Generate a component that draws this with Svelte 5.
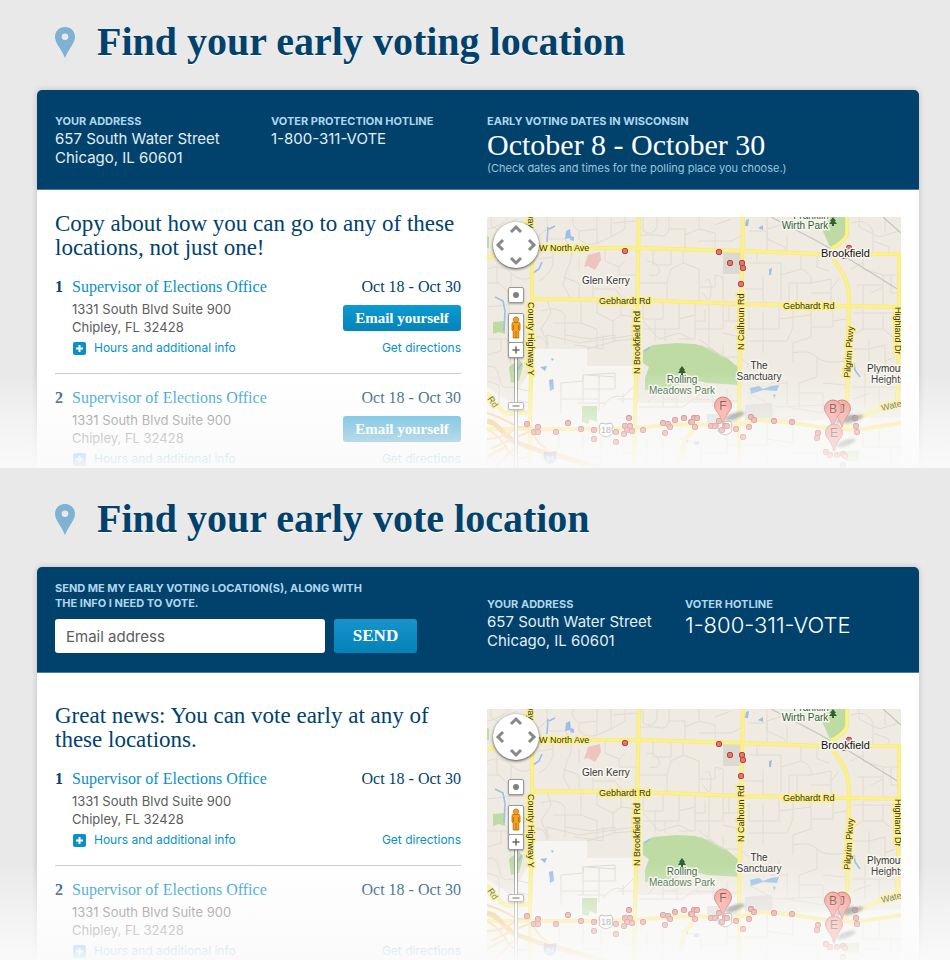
<script>
  const offices = [
    { n: 1, name: 'Supervisor of Elections Office', street: '1331 South Blvd Suite 900', city: 'Chipley, FL 32428', dates: 'Oct 18 - Oct 30' },
    { n: 2, name: 'Supervisor of Elections Office', street: '1331 South Blvd Suite 900', city: 'Chipley, FL 32428', dates: 'Oct 18 - Oct 30' }
  ];

  // Polling places plotted on the map, in map units
  const dots = [
    [40, 207], [51, 210], [47, 215], [51, 215], [69, 215], [81, 206], [94, 212], [107, 213], [107, 222],
    [129, 215], [129, 225], [142, 201], [138, 209], [143, 209], [140, 213], [145, 214], [137, 217], [156, 213],
    [176, 206], [181, 207], [183, 210], [178, 216], [188, 203], [197, 201], [204, 205], [207, 201], [210, 201],
    [205, 205], [208, 210], [224, 209], [228, 209], [232, 204], [235, 213], [238, 209], [240, 209], [249, 212],
    [256, 220], [264, 200], [267, 203], [262, 210], [287, 204], [305, 205], [331, 216], [330, 221], [368, 201],
    [369, 209], [370, 215], [339, 235], [343, 238], [350, 238], [356, 237], [358, 239], [356, 248], [138, 34],
    [232, 35], [243, 46], [255, 46], [256, 51], [254, 67], [362, 31], [357, 39]
  ];

  const pins = [
    { letter: 'F', x: 236, y: 189 },
    { letter: 'J', x: 355, y: 192 },
    { letter: 'B', x: 346, y: 192 },
    { letter: 'E', x: 347, y: 216 }
  ];

  // Residential streets
  const streets = [
    'M0 12Q14 10 22 0M4 0V8L12 14M18 8L30 2M0 52Q14 46 24 56T44 60M0 66H12L22 76V104M10 46V66M0 90L20 88M22 104L40 110M0 122H20L24 148M0 138L14 134V122M24 56V70M0 150Q10 146 12 160T24 170M0 164L12 168V186M24 170L42 174M26 182L42 186',
    'M60 0V12L48 22M86 0Q84 10 92 14V22Q100 30 110 26V0M92 14L110 12M110 26L124 20V0M124 20L138 12V0M126 6L150 4M62 22H78L84 31M66 31V48Q60 60 52 64M52 42L66 40M84 31Q86 42 80 52L76 68L84 82M76 60L92 66V82M92 40V54',
    'M106 58V82M106 72H128L136 82M118 31V44L132 50V58H150M132 50L138 44M122 60L134 72M54 94Q70 88 78 98V128M60 82L64 96L54 112L62 128M66 106H94V82M94 106L110 112V130M110 82V96L126 104L134 98V82M126 104V124L150 122M78 118L104 122L128 118M134 98L150 100M48 120Q58 118 60 130',
    'M156 0V14Q166 20 170 10V0M152 18H170Q180 22 182 12V0M182 12H198V32M198 18L212 12V0M212 12L228 16V33M212 24H244L256 18M228 8L244 2M166 32V48H184V33M160 44Q170 44 172 52T162 58M152 66H180L184 52L196 46V33M180 66V83M196 46L212 52V70H228V58M212 70V84M218 64Q224 58 224 74T216 76M228 58L236 60V84',
    'M156 84V102H176V84M168 102V124M156 112H192V84M192 102L208 98V86M208 98V122H192M208 112H236V86M222 88V128M236 104H253M236 116L253 120M242 86V104M212 122L228 134M178 112V124',
    'M262 14H280V34M280 0V22L298 30V35M280 12L300 6M300 18V35M262 46H294V84M270 34V46M294 58L314 52V37M314 52Q326 56 324 66H302V86M324 66L344 62M330 37V50L342 54M344 62V88M352 62L344 72M258 72H276V86M276 60V72M310 66V86M324 76H344',
    'M364 6Q380 0 386 14V37M372 0V10L392 20L412 14M386 24L402 30V37M376 37V52L396 58H412M396 58V88M370 68H396M376 68V88M384 76L396 70M404 58V76H412M364 52L376 46M398 0V16',
    'M262 94V112H292V90M276 94V136M262 124H300L306 110V90M292 102L324 98V90M324 98V120L306 126V146M324 110H346V92M346 104L360 102M306 136Q322 132 330 140T358 144M262 148L252 140M330 140V160L312 166V190M312 176H336V196M336 166L358 168M292 152V168M300 166H284',
    'M366 96H408M376 92V112L366 118M376 112H396V96M396 112L408 122M382 122V144M366 132H382L398 128V150M366 170H408M378 156V190M392 170V186M366 182L384 176M398 144L408 140',
    'M60 132V118L92 126L148 118M88 128L116 132V118M100 132L128 124V118M156 104L172 122L192 116L204 122M214 128L236 140H252M236 128V140M218 92V104H208',
    'M74 166V182H112V158M96 158V172H128V156M74 166L96 164V158L128 156M96 186V172M90 186H118M116 190Q124 176 136 180L146 170M130 182H146M136 176V186M100 158L128 160M74 182V196M112 182V194',
    'M152 190H196L206 182L252 184M160 222V244M176 220V251M192 222L214 226V251M214 236H240V216M240 228H252M258 228H280V206M280 222L306 226V208M306 236H330V251M280 236V251M114 220V251M96 218V240H114M72 218V232M136 222V236H146M262 192H286V202M300 190L336 196',
    'M262 176L288 190L336 188M300 164V188M376 216V230H414M392 210V230M404 230V251M376 240H394',
    'M160 186L168 178V172M176 190V174M190 190V178M210 184V172M226 190V174M240 184V172M176 182H190M210 178H226'
  ];

  const compass = [
    { dir: 'up', d: 'M2 9L7 4L12 9' },
    { dir: 'left', d: 'M9 2L4 7L9 12' },
    { dir: 'right', d: 'M5 2L10 7L5 12' },
    { dir: 'down', d: 'M2 5L7 10L12 5' }
  ];

  const mainRoads = 'M0 41L10 37M45 31L152 31L256 34L336 37H414M45 82L150 83L256 87L414 90M45 0V120L43 200V251M152 0L150 90L149 150L147 251M256 0L254 90L252 170V251M360 0V18Q356 26 345 31V38L350 48Q361 60 362 80L360 190V215M412 36V120L410 188M0 176L16 195L23 197L42 195M366 203L393 192L414 188M205 208Q206 218 198 222L193 245';
</script>

{#snippet title(text)}
  <div class="title">
    <svg class="marker" viewBox="0 0 20 31" aria-hidden="true">
      <path fill="#7fb2d2" fill-rule="evenodd" d="M10 0C15.8 0 20 4.2 20 9.8C20 14.5 16.6 18.6 14.4 22.4C12.5 25.6 11 28.6 10 31C9 28.6 7.5 25.6 5.6 22.4C3.4 18.6 0 14.5 0 9.8C0 4.2 4.2 0 10 0ZM10 6.4A3.3 3.3 0 1 0 10 13A3.3 3.3 0 1 0 10 6.4Z" />
    </svg>
    <h1>{text}</h1>
  </div>
{/snippet}

{#snippet address()}
  <div>
    <h3>Your address</h3>
    <p class="info">657 South Water Street<br />Chicago, IL 60601</p>
  </div>
{/snippet}

{#snippet locations(heading, email)}
  <div class="list">
    <h2>{heading}</h2>
    <ol>
      {#each offices as o}
        <li>
          <span class="num">{o.n}</span>
          <div class="office">
            <div class="line name"><a href="#office">{o.name}</a><span class="dates">{o.dates}</span></div>
            <div class="line">
              <address>{o.street}<br />{o.city}</address>
              {#if email}<button class="email" type="button">Email yourself</button>{/if}
            </div>
            <div class="line links">
              <a href="#hours" class="hours">
                <svg viewBox="0 0 13 13" aria-hidden="true"><rect width="13" height="13" rx="2" fill="#0990c8" /><path d="M6.5 3V10M3 6.5H10" stroke="#fff" stroke-width="2" /></svg>
                Hours and additional info
              </a>
              <a href="#directions">Get directions</a>
            </div>
          </div>
        </li>
      {/each}
    </ol>
  </div>
{/snippet}

{#snippet map(id)}
  <div class="map">
    <svg viewBox="0 0 414 251" role="img" aria-label="Map of early voting locations">
      <defs>
        <radialGradient id="{id}-pin" cx="45%" cy="30%" r="75%">
          <stop offset="0" stop-color="#ff9c90" /><stop offset="1" stop-color="#f4685f" />
        </radialGradient>
        <filter id="{id}-soft" x="-30%" y="-60%" width="160%" height="220%"><feGaussianBlur stdDeviation="1.3" /></filter>
      </defs>
      <rect width="414" height="251" fill="#efebe2" />
      <path fill="#f6f5f2" d="M45 132H100V149H150V186H252V200L300 204L414 200V251H0V170L24 186L45 150Z" />
      <g fill="#bddba3">
        <path d="M156 133L166 128L190 126L208 127L222 131L240 141L252 151V168L220 166L204 162L186 170L158 173V161L162 150L156 146Z" />
        <path d="M338 0H360V18L345 31L342 28L334 10Z" />
        <path d="M95 189H110V205L103 202L101 207L95 205Z" />
        <path d="M6 105L18 104V117L12 115L6 117ZM22 150L32 142L36 148L32 164L24 166ZM0 19L2 20V31H0ZM358 234H372V244H358Z" />
      </g>
      <path fill="#edc4c0" d="M97 50L101 38L113 35L114 43L108 53L101 49Z" />
      <path fill="#dcd9d3" d="M236 35H254V57H236ZM258 188L285 186V201L258 203ZM220 197H252V206H220Z" />
      <g fill="none" stroke="#e0dcd3" stroke-width="1">
        {#each streets as d}<path {d} />{/each}
      </g>
      <path fill="none" stroke="#c5c4c4" stroke-width="1.2" d="M284 0L330 24L362 42L412 73M396 0L414 16" />
      <g fill="none" stroke="#9dbfe6" stroke-width="1.6">
        <path d="M8 80L16 84L18 94L17 114M61 10L60 25M55 45L52 52L46 56M68 9L62 12M367 146L368 153L373 160M30 154L35 146M158 134L163 130" />
      </g>
      <g fill="#9dbfe6">
        <path d="M79 14L83 12L84 21L78 22ZM84 19L87 20V24L83 23ZM259 3L262 2L261 9H258ZM271 11L276 8V13ZM282 52L285 51L284 58H282ZM62 163L66 162L67 172L63 174ZM53 150L60 149L58 154ZM64 141L67 142L65 144ZM263 171L272 169L276 172L284 169L292 168L290 174L276 173L264 177ZM286 177L289 178L287 182ZM197 223L201 221V226ZM207 225L212 224V228H207Z" />
      </g>
      <!-- main roads -->
      <g fill="none" stroke-linejoin="round">
        <path stroke="#efe3a0" stroke-width="4" d={mainRoads} />
        <path stroke="#fdf280" stroke-width="3" d={mainRoads} />
        <path stroke="#fbe878" stroke-width="4" d="M0 212H120L148 211L170 209L205 207L248 209L270 203L300 205L340 211L370 213L414 206" />
        <path stroke="#f6bd5c" stroke-width="5" d="M0 204Q8 206 13 212T28 225L53 234L93 245L126 255" />
        <path stroke="#f8c97a" stroke-width="2" d="M0 196Q18 202 30 210H44M0 222Q16 222 28 212M4 232Q24 222 44 214L52 226L60 232M0 212Q14 220 20 232T40 240M0 240L20 229M8 251L26 232" />
      </g>
      <!-- road names -->
      <g class="road">
        <text x="52" y="34">W North Ave</text>
        <text x="112" y="87">Gebhardt Rd</text>
        <text x="296" y="92">Gebhardt Rd</text>
        <text transform="translate(41 -5) rotate(90)">way</text>
        <text transform="translate(41 85) rotate(90)">County Highway Y</text>
        <text transform="translate(153 157) rotate(-90)">N Brookfield Rd</text>
        <text transform="translate(257 133) rotate(-90)">N Calhoun Rd</text>
        <text transform="translate(363 161) rotate(-86)">Pilgrim Pkwy</text>
        <text transform="translate(408 90) rotate(90)">Highland Dr</text>
        <text transform="translate(0 182) rotate(55)">Rd</text>
        <text transform="translate(395 194) rotate(-14)">Watertown</text>
      </g>
      <!-- route shields -->
      <g fill="#fff" stroke="#777" stroke-width="1">
        <path d="M114 206L119 207L124 206L126 209Q124 212 126 216Q124 219 119 220Q114 219 112 216Q114 212 112 209Z" />
        <path d="M233 204L238 205L243 204L245 207Q243 210 245 214Q243 217 238 218Q233 217 231 214Q233 210 231 207Z" />
      </g>
      <text x="119" y="216" class="shield">18</text>
      <path fill="#5a7fc4" stroke="#fff" d="M57 234Q63 236 69 234Q73 244 63 248Q53 244 57 234Z" />
      <path fill="#d1564e" d="M57 234Q63 236 69 234L70 237H56Z" />
      <text x="63" y="244" class="shield interstate">94</text>
      <!-- polling places -->
      <g fill="#ef7267" stroke="#a84a42" stroke-width="1">
        {#each dots as [x, y]}<rect x={x - 2.500} y={y - 2.500} width="5" height="5" rx="1.500" />{/each}
      </g>
      <g class="place">
        <text x="95" y="67">Glen Kerry</text>
        <text x="334" y="40" class="city">Brookfield</text>
        <text x="272" y="152" text-anchor="middle">The</text>
        <text x="272" y="163" text-anchor="middle">Sanctuary</text>
        <text x="380" y="155">Plymouth</text>
        <text x="384" y="166">Heights</text>
      </g>
      <g class="place park">
        <text x="324" y="2" text-anchor="middle">Franklin</text>
        <text x="318" y="12" text-anchor="middle">Wirth Park</text>
        <text x="195" y="166" text-anchor="middle">Rolling</text>
        <text x="195" y="177" text-anchor="middle">Meadows Park</text>
      </g>
      <path fill="#2f6136" d="M346 0L349 4H347.500L350 7H347V9H345V7H342L344.500 4H343ZM195 149L198 153H197L199 156H196V158H194V156H191L193 153H192Z" />
      {#each pins as p}
        <ellipse cx={p.x + 12} cy={p.y + 10} rx="10" ry="3" transform="rotate(-20 {p.x + 12} {p.y + 10})" fill="#333" opacity="0.6" filter="url(#{id}-soft)" />
      {/each}
      {#each pins as p}
        <g transform="translate({p.x} {p.y})">
          <path d="M0 -9A8.500 8.500 0 0 1 8.500 0C8.500 5 2 8 0.500 18H-0.500C-2 8 -8.500 5 -8.500 0A8.500 8.500 0 0 1 0 -9Z" fill="url(#{id}-pin)" stroke="#9c4640" stroke-width="0.800" />
          <text y="4" class="letter">{p.letter}</text>
        </g>
      {/each}
    </svg>
    <div class="compass">
      {#each compass as c}
        <button type="button" class={c.dir} aria-label="Pan {c.dir}"><svg viewBox="0 0 14 14"><path d={c.d} /></svg></button>
      {/each}
    </div>
    <div class="track"></div>
    <button type="button" class="ctl reset" aria-label="Return to start"><svg viewBox="0 0 14 14"><circle cx="7" cy="7" r="3" fill="#808080" /></svg></button>
    <button type="button" class="ctl person" aria-label="Street view">
      <svg viewBox="0 0 14 28"><path fill="#f6a01c" stroke="#b8690a" stroke-width="0.800" d="M7 3A2.600 2.600 0 0 1 8.500 7.800Q11 8 11 10V16L9.800 17V24H4.200V17L3 16V10Q3 8 5.500 7.800A2.600 2.600 0 0 1 7 3Z" /><path stroke="#b8690a" stroke-width="0.800" d="M7 17V24M4.500 11V16M9.500 11V16M5 8.500H9" /></svg>
    </button>
    <button type="button" class="ctl plus" aria-label="Zoom in"><svg viewBox="0 0 14 14"><path d="M7 3.500V10.500M3.500 7H10.500" stroke="#666" stroke-width="1.500" /></svg></button>
    <button type="button" class="ctl minus" aria-label="Zoom out"><svg viewBox="0 0 14 6"><path d="M3.500 3H10.500" stroke="#666" stroke-width="1.500" /></svg></button>
  </div>
{/snippet}

<main>
  <section>
    {@render title('Find your early voting location')}
    <div class="card">
      <header class="columns">
        <div class="pair">
          {@render address()}
          <div>
            <h3>Voter protection hotline</h3>
            <p class="info">1-800-311-VOTE</p>
          </div>
        </div>
        <div>
          <h3>Early voting dates in Wisconsin</h3>
          <p class="when">October 8 - October 30</p>
          <p class="note">(Check dates and times for the polling place you choose.)</p>
        </div>
      </header>
      <div class="columns body">
        {@render locations('Copy about how you can go to any of these locations, not just one!', true)}
        {@render map('a')}
      </div>
    </div>
  </section>

  <section class="second">
    {@render title('Find your early vote location')}
    <div class="card">
      <header class="columns send">
        <form onsubmit={(e) => e.preventDefault()}>
          <label for="email">Send me my early voting location(s), along with the info I need to vote.</label>
          <div class="field">
            <input id="email" type="email" placeholder="Email address" />
            <button type="submit">SEND</button>
          </div>
        </form>
        <div class="pair contact">
          {@render address()}
          <div>
            <h3>Voter hotline</h3>
            <p class="phone">1-800-311-VOTE</p>
          </div>
        </div>
      </header>
      <div class="columns body">
        {@render locations('Great news: You can vote early at any of these locations.', false)}
        {@render map('b')}
      </div>
    </div>
  </section>
</main>

<style>
  :global(body) {
    background: #e9e9e9;
  }
  main {
    font-family: Inter, 'Liberation Sans', sans-serif;
    color: #5c5c5c;
  }
  h1, h2, h3, p, ol { margin: 0; padding: 0; font-weight: inherit; }
  a { color: #0990c8; text-decoration: none; }
  button { border: 0; padding: 0; cursor: pointer; }

  section {
    position: relative;
    overflow: hidden;
    padding: 0 31px 0 37px;
    background: #e9e9e9;
  }
  section::after {
    content: '';
    position: absolute;
    inset: auto 0 0;
    height: 96px;
    background: linear-gradient(rgba(250, 250, 250, 0), rgba(250, 250, 250, 0.550) 50%, rgba(250, 250, 250, 0.960));
    pointer-events: none;
  }
  .second { padding-top: 9px; }

  .title {
    display: flex;
    align-items: center;
    gap: 22px;
    height: 84px;
    padding: 0 18px 6px;
    box-sizing: content-box;
  }
  .marker { width: 20px; height: 31px; flex: none; }
  h1 {
    font: bold 40px/48px 'Liberation Serif', serif;
    color: #00426b;
    text-shadow: 0 1px 0 #fff;
  }

  .card {
    background: #fff;
    border-radius: 5px 5px 0 0;
    box-shadow: 0 0 6px rgba(0, 0, 0, 0.180);
  }
  .columns {
    display: grid;
    grid-template-columns: 406fr 414fr;
    column-gap: 26px;
    padding: 0 18px;
  }
  header {
    background: #00426b;
    color: #e3eef5;
    border-radius: 5px 5px 0 0;
    border-bottom: 1px solid #4d7d9d;
  }
  header.columns { padding-top: 24px; padding-bottom: 13px; }
  header.send { padding-top: 14px; padding-bottom: 19px; }
  .pair { display: grid; grid-template-columns: 216px 1fr; }
  .contact { grid-template-columns: 198px 1fr; padding-top: 16px; }
  h3, label {
    font-size: 11px;
    line-height: 15px;
    font-weight: 700;
    text-transform: uppercase;
    color: #b0d6ec;
  }
  .info { font-size: 15px; line-height: 19px; }
  .when {
    font: 30px/32px 'Liberation Serif', serif;
    color: #fff;
  }
  .note { font-size: 11px; line-height: 15px; color: #9cc3dc; }
  .phone { font-size: 22px; line-height: 26px; font-weight: 300; color: #fff; }

  label { display: block; width: 326px; max-width: 100%; }
  .field { display: flex; gap: 9px; margin-top: 8px; }
  input {
    width: 270px;
    min-width: 0;
    height: 34px;
    box-sizing: border-box;
    padding: 0 11px;
    border: 0;
    border-radius: 3px;
    background: #fff;
    font: 15px/20px Inter, sans-serif;
    color: #5c5c5c;
  }
  input::placeholder { color: #5c5c5c; opacity: 1; }
  .field button {
    width: 83px;
    height: 34px;
    border-radius: 3px;
    background: linear-gradient(#1593cb, #0583b8);
    color: #fff;
    font: bold 17px/20px 'Liberation Serif', serif;
  }

  .body { padding-top: 22px; align-items: start; }
  .send + .body { padding-top: 31px; }
  h2 {
    font: 23px/24px 'Liberation Serif', serif;
    color: #00426b;
  }
  ol { list-style: none; margin-top: 17px; }
  li {
    display: flex;
    padding-bottom: 16px;
    border-bottom: 1px solid #ccc;
  }
  li + li { padding-top: 14px; }
  li:last-child { padding-bottom: 0; border: 0; }
  .num {
    width: 17px;
    font: bold 16px/20px 'Liberation Serif', serif;
    color: #00426b;
  }
  .office { flex: 1; min-width: 0; }
  .line { display: flex; justify-content: space-between; align-items: center; }
  .name { font: 16px/20px 'Liberation Serif', serif; }
  .dates { color: #00426b; }
  address { font-style: normal; font-size: 13px; line-height: 18px; padding: 3px 0; }
  .email {
    width: 118px;
    height: 26px;
    border-radius: 3px;
    background: linear-gradient(#0c9bd3, #0583b8);
    color: #fff;
    font: bold 15px/20px 'Liberation Serif', serif;
  }
  .links { font-size: 12px; line-height: 18px; }
  .hours { display: flex; align-items: center; gap: 8px; }
  .hours svg { width: 13px; height: 13px; margin-left: 1px; }

  .map { position: relative; margin-top: 5px; overflow: hidden; }
  .map > svg { display: block; width: 100%; height: auto; }
  .road text, .place text {
    font: 9px 'Liberation Sans', sans-serif;
    fill: #333;
    stroke: #fdf07c;
    stroke-width: 3px;
    paint-order: stroke;
    stroke-linejoin: round;
  }
  .place text { font-size: 10px; stroke: #f8f6f0; }
  .place .city { font-size: 11px; fill: #111; }
  .park text { fill: #2f6136; }
  .shield { font: 9px 'Liberation Sans', sans-serif; fill: #444; text-anchor: middle; }
  .interstate { font-size: 7px; fill: #fff; }
  .letter { font: 12px 'Liberation Sans', sans-serif; fill: #3a1512; text-anchor: middle; }

  .compass {
    position: absolute;
    left: 6px;
    top: 5px;
    width: 46px;
    height: 46px;
    border-radius: 50%;
    background: #fff;
    box-shadow: 0 1px 3px rgba(0, 0, 0, 0.700);
  }
  .compass button { position: absolute; width: 14px; height: 14px; background: none; }
  .compass svg, .ctl svg { display: block; width: 100%; height: 100%; }
  .compass path { fill: none; stroke: #888; stroke-width: 3; }
  .up { left: 16px; top: 1px; }
  .down { left: 16px; bottom: 1px; }
  .left { left: 1px; top: 16px; }
  .right { right: 1px; top: 16px; }
  .ctl {
    position: absolute;
    left: 21px;
    width: 16px;
    height: 16px;
    border: 1px solid #999;
    border-radius: 2px;
    background: #fff;
    box-sizing: border-box;
    box-shadow: 0 1px 2px rgba(0, 0, 0, 0.300);
  }
  .reset { top: 70px; }
  .person { top: 96px; height: 30px; }
  .plus { top: 125px; }
  .minus { top: 185px; height: 8px; }
  .track {
    position: absolute;
    left: 27px;
    top: 140px;
    bottom: 0;
    width: 2px;
    background: #fff;
    border: solid #999;
    border-width: 0 1px;
  }
</style>
